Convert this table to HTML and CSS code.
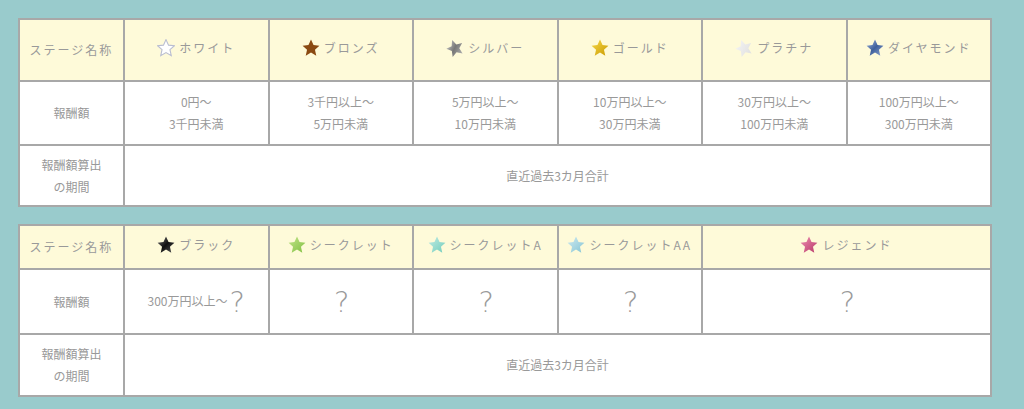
FILE: index.html
```html
<!DOCTYPE html>
<html lang="ja">
<head>
<meta charset="utf-8">
<link rel="stylesheet" href="styles.css">
</head>
<body>
<svg width="0" height="0" class="defs">
  <defs>
    <path id="st" d="M7 0 L9.1 4.6 L14 5.1 L10.3 8.4 L11.4 13.4 L7 10.8 L2.6 13.4 L3.7 8.4 L0 5.1 L4.9 4.6 Z"/>
    <linearGradient id="g-silver" x1="0" y1="0" x2="1" y2="1"><stop offset="0" stop-color="#d8d8d8"/><stop offset="0.5" stop-color="#777"/><stop offset="1" stop-color="#bbb"/></linearGradient>
    <linearGradient id="g-gold" x1="0" y1="0" x2="1" y2="1"><stop offset="0" stop-color="#f7d84a"/><stop offset="1" stop-color="#c99a00"/></linearGradient>
    <linearGradient id="g-plat" x1="0" y1="0" x2="1" y2="1"><stop offset="0" stop-color="#f6f6f6"/><stop offset="1" stop-color="#dedede"/></linearGradient>
    <linearGradient id="g-dia" x1="0" y1="0" x2="1" y2="1"><stop offset="0" stop-color="#a8bde0"/><stop offset="0.5" stop-color="#3e5f9c"/><stop offset="1" stop-color="#8fa6d2"/></linearGradient>
    <linearGradient id="g-black" x1="0" y1="0" x2="1" y2="1"><stop offset="0" stop-color="#777"/><stop offset="0.5" stop-color="#111"/><stop offset="1" stop-color="#555"/></linearGradient>
    <linearGradient id="g-green" x1="0" y1="0" x2="1" y2="1"><stop offset="0" stop-color="#c3e48a"/><stop offset="1" stop-color="#7fbf40"/></linearGradient>
    <linearGradient id="g-mint" x1="0" y1="0" x2="1" y2="1"><stop offset="0" stop-color="#c3ece4"/><stop offset="1" stop-color="#70ccbb"/></linearGradient>
    <linearGradient id="g-sky" x1="0" y1="0" x2="1" y2="1"><stop offset="0" stop-color="#d0eaf0"/><stop offset="1" stop-color="#84c4d4"/></linearGradient>
    <linearGradient id="g-pink" x1="0" y1="0" x2="1" y2="1"><stop offset="0" stop-color="#ee8fb2"/><stop offset="1" stop-color="#b73668"/></linearGradient>
  </defs>
</svg>

<table class="stage">
  <tr class="head">
    <th class="label">ステージ名称</th>
    <th><span class="nm"><svg class="star" viewBox="-0.5 -0.5 15 15"><use href="#st" fill="#fff" stroke="#b9bdd0" stroke-width="0.9"/></svg>ホワイト</span></th>
    <th><span class="nm"><svg class="star" viewBox="-0.5 -0.5 15 15"><use href="#st" fill="#8a4a12"/></svg>ブロンズ</span></th>
    <th><span class="nm"><svg class="star tilt" viewBox="-0.5 -0.5 15 15"><use href="#st" fill="url(#g-silver)"/></svg>シルバー</span></th>
    <th><span class="nm"><svg class="star" viewBox="-0.5 -0.5 15 15"><use href="#st" fill="url(#g-gold)"/></svg>ゴールド</span></th>
    <th><span class="nm"><svg class="star tilt" viewBox="-0.5 -0.5 15 15"><use href="#st" fill="url(#g-plat)"/></svg>プラチナ</span></th>
    <th><span class="nm"><svg class="star" viewBox="-0.5 -0.5 15 15"><use href="#st" fill="url(#g-dia)"/></svg>ダイヤモンド</span></th>
  </tr>
  <tr class="mid">
    <td class="label">報酬額</td>
    <td>0円～<br>3千円未満</td>
    <td>3千円以上～<br>5万円未満</td>
    <td>5万円以上～<br>10万円未満</td>
    <td>10万円以上～<br>30万円未満</td>
    <td>30万円以上～<br>100万円未満</td>
    <td>100万円以上～<br>300万円未満</td>
  </tr>
  <tr class="bot">
    <td class="label">報酬額算出<br>の期間</td>
    <td colspan="6">直近過去3カ月合計</td>
  </tr>
</table>

<table class="stage second">
  <tr class="head short">
    <th class="label">ステージ名称</th>
    <th><span class="nm"><svg class="star" viewBox="-0.5 -0.5 15 15"><use href="#st" fill="url(#g-black)"/></svg>ブラック</span></th>
    <th><span class="nm"><svg class="star" viewBox="-0.5 -0.5 15 15"><use href="#st" fill="url(#g-green)"/></svg>シークレット</span></th>
    <th><span class="nm"><svg class="star" viewBox="-0.5 -0.5 15 15"><use href="#st" fill="url(#g-mint)"/></svg>シークレットA</span></th>
    <th><span class="nm"><svg class="star" viewBox="-0.5 -0.5 15 15"><use href="#st" fill="url(#g-sky)"/></svg>シークレットAA</span></th>
    <th colspan="2"><span class="nm"><svg class="star" viewBox="-0.5 -0.5 15 15"><use href="#st" fill="url(#g-pink)"/></svg>レジェンド</span></th>
  </tr>
  <tr class="mid">
    <td class="label">報酬額</td>
    <td>300万円以上～<span class="q">?</span></td>
    <td><span class="q">?</span></td>
    <td><span class="q">?</span></td>
    <td><span class="q">?</span></td>
    <td colspan="2"><span class="q">?</span></td>
  </tr>
  <tr class="bot">
    <td class="label">報酬額算出<br>の期間</td>
    <td colspan="6">直近過去3カ月合計</td>
  </tr>
</table>
</body>
</html>
```

FILE: styles.css
```css
html, body {
  margin: 0;
  padding: 0;
  background: #99cbcc;
}
body {
  padding: 18px 0 0 18px;
  font-family: "Noto Sans CJK JP", "Noto Sans", sans-serif;
  color: #999999;
}
.defs {
  position: absolute;
  width: 0;
  height: 0;
}
.stage {
  width: 974px;
  border-collapse: collapse;
  table-layout: fixed;
  background: #fff;
  border: 2px solid #a2a2a2;
}
.stage.second {
  margin-top: 17px;
}
.stage th,
.stage td {
  border: 2px solid #a8a8a8;
  text-align: center;
  vertical-align: middle;
  padding: 0;
  font-size: 12px;
  line-height: 22px;
  font-weight: normal;
}
.stage th.label,
.stage td.label {
  width: 103px;
}
.head th {
  background: #fefad9;
  height: 60px;
  letter-spacing: 2px;
}
.head.short th {
  height: 42px;
}
.mid td {
  height: 62px;
}
.second .mid td {
  height: 63px;
}
.bot td {
  height: 59px;
}
.second .bot td {
  height: 60px;
}
.nm {
  display: inline-flex;
  align-items: center;
  gap: 4px;
}
.star {
  width: 18px;
  height: 18px;
  display: block;
}
.star.tilt {
  transform: rotate(-20deg);
}
.q {
  font-size: 29px;
  line-height: 22px;
  font-family: "DejaVu Sans", "Liberation Sans", sans-serif;
  font-weight: 200;
  color: #9a9a9a;
  vertical-align: middle;
  margin-left: 2px;
}
```
